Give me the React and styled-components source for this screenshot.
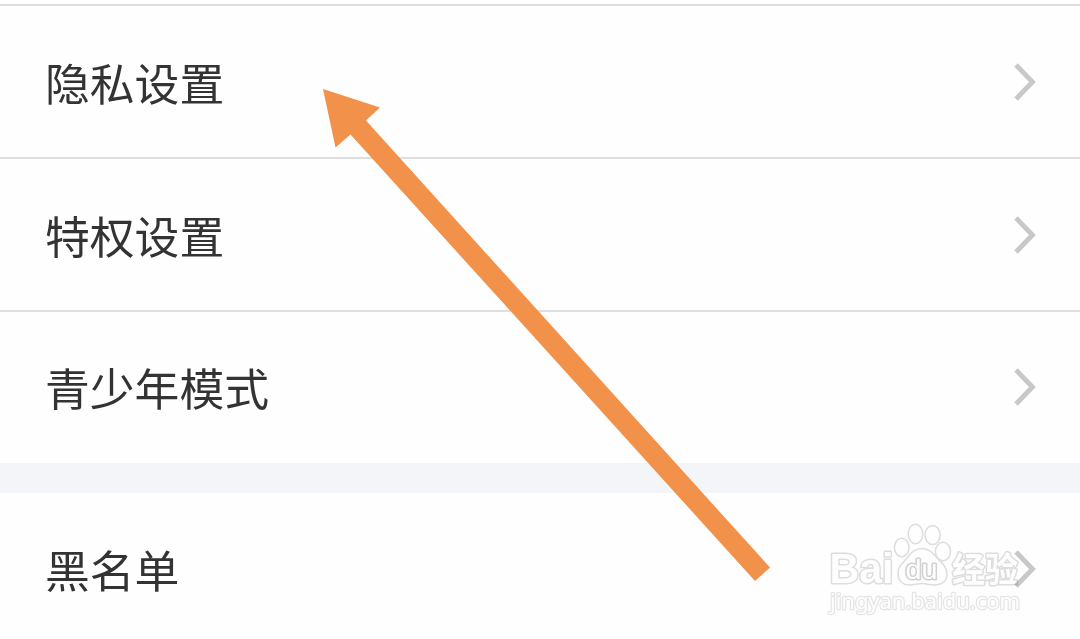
import React from 'react';
import styled, { createGlobalStyle } from 'styled-components'

const groups = [
    ['隐私设置', '特权设置', '青少年模式'],
    ['黑名单'],
]

function Chevron() {
    return (
        <ChevronIcon viewBox="0 0 24 40">
            <path d="M3 3 L19.5 20 L3 37" />
        </ChevronIcon>
    )
}

function Arrow() {
    return (
        <Overlay viewBox="0 0 1080 639">
            <polygon
                fill="#f2924a"
                points="323,89 380,107.5 366,120.5 770,567.5 755,581 350.5,134.5 335.5,147.5"
            />
        </Overlay>
    )
}

function Watermark() {
    return (
        <WatermarkOverlay viewBox="0 0 1080 639">
            <WatermarkGroup>
                <text className="logo" x="829.5" y="583" fontSize="42" textLength="64" lengthAdjust="spacingAndGlyphs">Bai</text>
                <ellipse cx="901.7" cy="547.5" rx="7.3" ry="9.3" />
                <ellipse cx="915.5" cy="534" rx="7.3" ry="9.7" />
                <ellipse cx="932.6" cy="535" rx="7.6" ry="9.5" />
                <ellipse cx="943" cy="551.5" rx="7.6" ry="9.3" />
                <path d="M922 548.5 C929 548.5 933 553 937 558 C942 563 947 567 947 574 C947 582 941 585 934 585 C929 585 926 583.5 922 583.5 C918 583.5 914 585 909 585 C902 585 898 580 898 573 C898 566 903 563 908 557 C912 552 915 548.5 922 548.5 Z" />
                <text className="du" x="905.5" y="579" fontSize="27" textLength="32" lengthAdjust="spacingAndGlyphs">du</text>
                <text className="cjk" x="952" y="581.5" fontSize="34" textLength="66" lengthAdjust="spacingAndGlyphs">经验</text>
                <text className="url" x="830" y="609" fontSize="21" textLength="190" lengthAdjust="spacingAndGlyphs">jingyan.baidu.com</text>
            </WatermarkGroup>
        </WatermarkOverlay>
    )
}

function App() {
    return (
        <Page>
            <GlobalStyle />
            {groups.map((items, i) => (
                <Group key={i}>
                    {items.map((label, j) => (
                        <Row key={label} $divider={i === 0 || j > 0} $last={j === items.length - 1}>
                            <Label>{label}</Label>
                            <Chevron />
                        </Row>
                    ))}
                </Group>
            ))}
            <Arrow />
            <Watermark />
        </Page>
    )
}

const GlobalStyle = createGlobalStyle`
    body {
        margin: 0;
        background-color: #fefefe;
    }
`;

const Page = styled.main`
    position: relative;
    box-sizing: border-box;
    display: flex;
    flex-direction: column;
    gap: 30px;
    height: 639px;
    padding-top: 4px;
    overflow: hidden;
    background: linear-gradient(#fefefe 4px, #f4f5f9 4px);
    font-family: "Noto Sans CJK SC", sans-serif;
`;

const Group = styled.section`
    flex-shrink: 0;
    background-color: #fefefe;
    &:last-of-type {
        flex: 1 0 auto;
    }
`;

const Row = styled.div`
    box-sizing: border-box;
    display: flex;
    align-items: center;
    justify-content: space-between;
    height: 153px;
    padding: 0 43px ${props => props.$last ? '2px' : '0'} 45px;
    border-top: ${props => props.$divider ? '2px solid #dfdfdf' : 'none'};
`;

const Label = styled.span`
    color: #333;
    font-size: 44.8px;
    line-height: 64px;
`;

const ChevronIcon = styled.svg`
    width: 24px;
    height: 40px;
    fill: none;
    stroke: #c8c8c8;
    stroke-width: 4.8;
`;

const Overlay = styled.svg`
    position: absolute;
    top: 0;
    left: 0;
    width: 1080px;
    height: 639px;
    pointer-events: none;
`;

// multiply keeps the chevron under the stamp visible
const WatermarkOverlay = styled(Overlay)`
    mix-blend-mode: multiply;
`;

const WatermarkGroup = styled.g`
    fill: #fff;
    stroke: #dedede;
    stroke-width: 1.5;
    stroke-linejoin: round;
    text {
        font-weight: 700;
        paint-order: stroke;
        stroke-width: 3;
    }
    .logo, .du {
        font-family: "Liberation Sans", sans-serif;
    }
    .du {
        font-weight: 400;
        stroke: #d2d2d2;
    }
    .cjk {
        font-family: "Noto Sans CJK SC", sans-serif;
    }
    .url {
        font-family: "Noto Sans", sans-serif;
        font-weight: 400;
        stroke: #e6e6e6;
        stroke-width: 2.4;
    }
`;

export default App
